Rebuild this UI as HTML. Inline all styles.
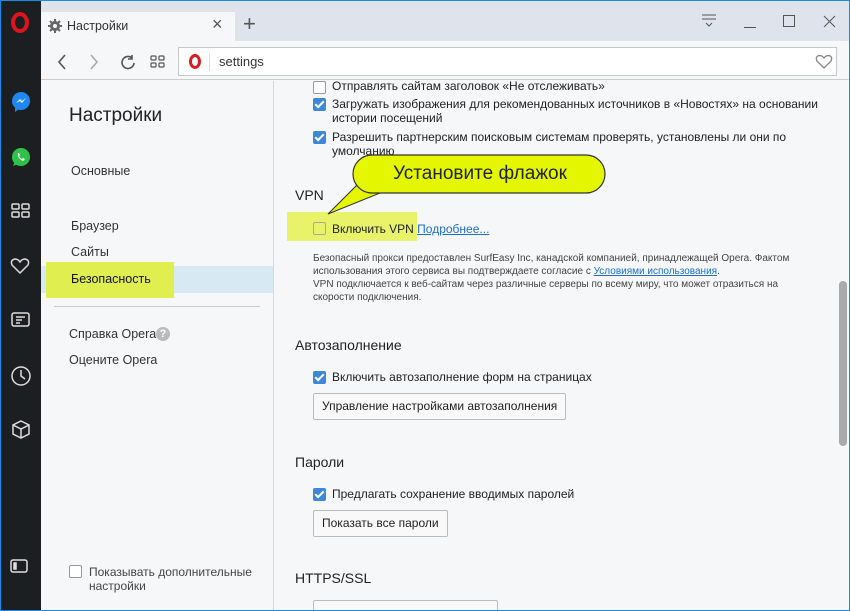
<!DOCTYPE html>
<html><head><meta charset="utf-8"><style>
*{margin:0;padding:0;box-sizing:border-box}
body{width:850px;height:611px;overflow:hidden;background:#1a8ae6;font-family:"Liberation Sans",sans-serif;color:#222;position:relative}
.a{position:absolute}
.win{left:1px;top:1px;width:848px;height:609px;background:#f6f7f9;overflow:hidden}
.side{left:0;top:0;width:40px;height:609px;background:#1c1f22}
.tabbar{left:40px;top:0;width:808px;height:40px;background:#dfe4ec}
.tab{left:40px;top:11px;width:194px;height:30px;background:#f6f7f9}
.tool{left:40px;top:40px;width:808px;height:39px;background:#f6f7f9;border-bottom:1px solid #ccc}
.addr{left:177px;top:46px;width:659px;height:29px;background:#fff;border:1px solid #c8c8c8}
.t{font-size:12.5px;color:#333;white-space:nowrap}
.s{font-size:12px;color:#222;white-space:nowrap}
.cb{width:13px;height:13px;border:1px solid #999;background:#fff;border-radius:2px}
.cbc{width:13px;height:13px;background:#3e88d8;border-radius:2px}
.cbc:after{content:"";position:absolute;left:4px;top:1px;width:3px;height:7px;border:solid #fff;border-width:0 2px 2px 0;transform:rotate(45deg)}
.btn{border:1px solid #bbb;border-radius:2px;background:#f9f9f9;font-size:12px;padding:0 8px;height:27px;line-height:25px;white-space:nowrap}
.h{font-size:14px;color:#222}
.small{font-size:10px;color:#444;line-height:13px}
a{color:#1a6fd0;text-decoration:underline}
</style></head><body>
<div class="a win">
<div class="a side"></div>
<div class="a" style="left:10px;top:11px;width:18px;height:21px;border:4px solid #e0141c;border-radius:50%"></div>
<svg class="a" style="left:9px;top:90px" width="22" height="22"><circle cx="11" cy="10" r="9" fill="#1e88f0"/><path d="M5 17 L5 21 L9 18Z" fill="#1e88f0"/><path d="M6 12 L10 8 L12 10 L16 7 L12 12 L10 10Z" fill="#fff"/></svg>
<svg class="a" style="left:9px;top:145px" width="22" height="22"><circle cx="11" cy="11" r="9" fill="#2fc24b"/><path d="M3 20 L5 15 L8 18Z" fill="#2fc24b"/><path d="M8 7 Q7 12 13 15 L15 13 L13 12 L12 13 Q10 12 9 10 L10 9 L9 7Z" fill="#fff"/></svg>
<svg class="a" style="left:10px;top:202px" width="20" height="16" fill="none" stroke="#ddd" stroke-width="1.5"><rect x="1" y="1" width="7" height="5" rx="1"/><rect x="11" y="1" width="7" height="5" rx="1"/><rect x="1" y="9" width="7" height="5" rx="1"/><rect x="11" y="9" width="7" height="5" rx="1"/></svg>
<svg class="a" style="left:9px;top:256px" width="20" height="18" fill="none" stroke="#ddd" stroke-width="1.5"><path d="M10 16 L2 8 Q0 3 5 2 Q8 2 10 5 Q12 2 15 2 Q20 3 18 8Z"/></svg>
<svg class="a" style="left:10px;top:311px" width="20" height="16" fill="none" stroke="#ddd" stroke-width="1.5"><rect x="1" y="1" width="17" height="13" rx="2"/><path d="M5 5h9M5 8h6M5 11h4"/></svg>
<svg class="a" style="left:9px;top:364px" width="22" height="22" fill="none" stroke="#ddd" stroke-width="1.5"><circle cx="11" cy="11" r="9"/><path d="M11 5v6l4 3"/></svg>
<svg class="a" style="left:10px;top:419px" width="20" height="20" fill="none" stroke="#ddd" stroke-width="1.5"><path d="M10 1 L18 5 L18 14 L10 18 L2 14 L2 5Z M2 5 L10 9 L18 5 M10 9 V18"/></svg>
<svg class="a" style="left:9px;top:558px" width="20" height="16" fill="none" stroke="#ddd" stroke-width="1.5"><rect x="1" y="1" width="16" height="12" rx="2"/><rect x="4" y="4" width="2" height="6" fill="#ddd"/></svg>

<div class="a tabbar"></div>
<div class="a tab"></div>
<svg class="a" style="left:47px;top:18px" width="14" height="14"><circle cx="7" cy="7" r="5" fill="#666"/><path d="M6 0h2v14h-2zM0 6h14v2h-14z" fill="#666"/><path d="M2 2l10 10M12 2L2 12" stroke="#666" stroke-width="2"/><circle cx="7" cy="7" r="2" fill="#f6f7f9"/></svg>
<div class="a t" style="left:66px;top:18px">Настройки</div>
<div class="a" style="left:211px;top:13px;font-size:18px;color:#555">×</div>
<div class="a" style="left:242px;top:10px;font-size:22px;color:#555">+</div>
<svg class="a" style="left:700px;top:13px" width="16" height="14" stroke="#555" fill="none"><path d="M1 1h14M1 5h14M5 9l3 3 3-3"/></svg>
<div class="a" style="left:743px;top:26px;width:12px;height:1px;background:#555"></div>
<div class="a" style="left:782px;top:14px;width:12px;height:12px;border:1px solid #555"></div>
<svg class="a" style="left:822px;top:14px" width="13" height="13" stroke="#555"><path d="M1 1L12 12M12 1L1 12"/></svg>

<div class="a tool"></div>
<svg class="a" style="left:55px;top:52px" width="140" height="18" fill="none" stroke="#555" stroke-width="1.6"><path d="M9 2L3 9l6 7"/><path d="M35 2l6 7-6 7" stroke="#aaa"/><path d="M76 5a6 6 0 1 0 2 5M76 2v4h-4"/><rect x="95" y="3" width="5" height="4" rx="1" stroke-width="1.2"/><rect x="103" y="3" width="5" height="4" rx="1" stroke-width="1.2"/><rect x="95" y="10" width="5" height="4" rx="1" stroke-width="1.2"/><rect x="103" y="10" width="5" height="4" rx="1" stroke-width="1.2"/></svg>
<div class="a addr"></div>
<div class="a" style="left:188px;top:53px;width:12px;height:15px;border:3px solid #d81c20;border-radius:50%"></div>
<div class="a" style="left:208px;top:52px;width:1px;height:18px;background:#ddd"></div>
<div class="a t" style="left:218px;top:53px;font-size:13px">settings</div>
<svg class="a" style="left:814px;top:53px" width="18" height="16" fill="none" stroke="#888" stroke-width="1.3"><path d="M9 14 L2 7 Q0 2 4.5 1.5 Q7 1.5 9 4 Q11 1.5 13.5 1.5 Q18 2 16 7Z"/></svg>

<div class="a" style="left:272px;top:80px;width:1px;height:529px;background:#d8d8d8"></div>
<div class="a" style="left:68px;top:104px;font-size:19px;color:#222">Настройки</div>
<div class="a t" style="left:70px;top:163px">Основные</div>
<div class="a t" style="left:70px;top:218px">Браузер</div>
<div class="a t" style="left:70px;top:244px">Сайты</div>
<div class="a" style="left:40px;top:265px;width:232px;height:27px;background:#d7e9f3"></div>
<div class="a" style="left:45px;top:261px;width:128px;height:36px;background:#e0ee50"></div>
<div class="a t" style="left:70px;top:271px;color:#111">Безопасность</div>
<div class="a" style="left:53px;top:305px;width:206px;height:1px;background:#ccc"></div>
<div class="a t" style="left:68px;top:326px">Справка Opera</div>
<div class="a" style="left:155px;top:326px;width:14px;height:14px;border-radius:50%;background:#bbb;color:#fff;font-size:11px;font-weight:bold;text-align:center;line-height:14px">?</div>
<div class="a t" style="left:68px;top:352px">Оцените Opera</div>
<div class="a cb" style="left:68px;top:564px"></div>
<div class="a s" style="left:88px;top:564px;line-height:14px;color:#444">Показывать дополнительные<br>настройки</div>

<div class="a cb" style="left:312px;top:80px"></div>
<div class="a s" style="left:331px;top:78px">Отправлять сайтам заголовок «Не отслеживать»</div>
<div class="a cbc" style="left:312px;top:97px"></div>
<div class="a s" style="left:331px;top:96px;line-height:14px">Загружать изображения для рекомендованных источников в «Новостях» на основании<br>истории посещений</div>
<div class="a cbc" style="left:312px;top:130px"></div>
<div class="a s" style="left:331px;top:129px;line-height:14px">Разрешить партнерским поисковым системам проверять, установлены ли они по<br>умолчанию</div>

<div class="a h" style="left:294px;top:186px">VPN</div>
<div class="a" style="left:286px;top:211px;width:130px;height:29px;background:#e8f25a;opacity:.9"></div>
<div class="a cb" style="left:312px;top:221px;background:transparent;border-color:#aa9"></div>
<div class="a s" style="left:331px;top:221px">Включить VPN <a>Подробнее...</a></div>
<div class="a small" style="left:312px;top:251px;white-space:nowrap">Безопасный прокси предоставлен SurfEasy Inc, канадской компанией, принадлежащей Opera. Фактом<br>использования этого сервиса вы подтверждаете согласие с <a>Условиями использования</a>.<br>VPN подключается к веб-сайтам через различные серверы по всему миру, что может отразиться на<br>скорости подключения.</div>

<svg class="a" style="left:300px;top:150px" width="310" height="80"><path d="M64 26 L27 63 L84 40Z" fill="#e5f700" stroke="#333" stroke-width="1"/><rect x="52" y="4" width="252" height="38" rx="19" fill="#e5f700" stroke="#333" stroke-width="1.2"/><path d="M63 28 L83 39" stroke="#e5f700" stroke-width="3"/></svg>
<div class="a" style="left:392px;top:162px;font-size:19px;color:#222">Установите флажок</div>

<div class="a h" style="left:294px;top:336px">Автозаполнение</div>
<div class="a cbc" style="left:312px;top:370px"></div>
<div class="a s" style="left:331px;top:369px">Включить автозаполнение форм на страницах</div>
<div class="a btn" style="left:312px;top:392px">Управление настройками автозаполнения</div>

<div class="a h" style="left:294px;top:453px">Пароли</div>
<div class="a cbc" style="left:312px;top:487px"></div>
<div class="a s" style="left:331px;top:486px">Предлагать сохранение вводимых паролей</div>
<div class="a btn" style="left:312px;top:509px">Показать все пароли</div>

<div class="a h" style="left:294px;top:569px">HTTPS/SSL</div>
<div class="a btn" style="left:312px;top:599px;width:185px"></div>

<div class="a" style="left:838px;top:280px;width:8px;height:165px;background:#aaa;border-radius:4px"></div>
</div>
</body></html>
